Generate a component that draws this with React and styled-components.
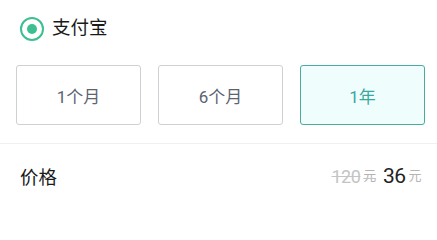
import React, { useState } from "react";
import styled, { createGlobalStyle } from "styled-components";

const GlobalStyle = createGlobalStyle`
  html, body {
    margin: 0;
    padding: 0;
    background: #ffffff;
    font-family: Roboto, "Noto Sans CJK SC", sans-serif;
  }
`;

const plans = ["1个月", "6个月", "1年"];

export default function App() {
  const [selected, setSelected] = useState(2);

  return (
    <>
      <GlobalStyle />
      <Page>
        <PayRow>
          <Radio />
          <PayLabel>支付宝</PayLabel>
        </PayRow>
        <Plans>
          {plans.map((p, i) => (
            <PlanButton key={p} $active={i === selected} onClick={() => setSelected(i)}>
              {p}
            </PlanButton>
          ))}
        </Plans>
        <Divider />
        <PriceRow>
          <PriceLabel>价格</PriceLabel>
          <Prices>
            <OldPrice>
              120<Unit>元</Unit>
            </OldPrice>
            <NewPrice>
              36<Unit>元</Unit>
            </NewPrice>
          </Prices>
        </PriceRow>
      </Page>
    </>
  );
}

const Page = styled.div`
  width: 437px;
  height: 209px;
  display: flex;
  flex-direction: column;
`;

const PayRow = styled.div`
  display: flex;
  align-items: center;
  gap: 8px;
  padding: 17px 20px 0;
  height: 24px;
`;

const Radio = styled.span`
  width: 24px;
  height: 24px;
  box-sizing: border-box;
  border: 2px solid #3dbf90;
  border-radius: 50%;
  display: flex;
  align-items: center;
  justify-content: center;

  &::after {
    content: "";
    width: 10px;
    height: 10px;
    border-radius: 50%;
    background: #3dbf90;
  }
`;

const PayLabel = styled.span`
  font-size: 18.5px;
  color: #1a1a1a;
  line-height: 24px;
  margin-top: -2px;
`;

const Plans = styled.div`
  display: flex;
  gap: 17px;
  padding: 24px 0 0 16px;
`;

const PlanButton = styled.div`
  width: 125px;
  height: 60px;
  box-sizing: border-box;
  border: 1px solid ${(props) => (props.$active ? "#4aaba1" : "#cfd0d2")};
  border-radius: 3px;
  background: ${(props) => (props.$active ? "#f0fdfd" : "#ffffff")};
  color: ${(props) => (props.$active ? "#39a89e" : "#5b6372")};
  font-size: 17px;
  display: flex;
  align-items: center;
  justify-content: center;
  cursor: pointer;
`;

const Divider = styled.div`
  height: 1px;
  background: #f0f0f0;
  margin-top: 18px;
`;

const PriceRow = styled.div`
  display: flex;
  align-items: center;
  justify-content: space-between;
  padding: 0 16px 0 20px;
  height: 70px;
`;

const PriceLabel = styled.span`
  font-size: 18.5px;
  color: #1a1a1a;
`;

const Prices = styled.div`
  display: flex;
  align-items: baseline;
  gap: 7px;
`;

const OldPrice = styled.span`
  font-size: 18px;
  letter-spacing: -0.5px;
  color: #c4c4c4;
  text-decoration: line-through;
`;

const NewPrice = styled.span`
  font-size: 21px;
  letter-spacing: -0.5px;
  color: #222222;
`;

const Unit = styled.span`
  font-size: 13px;
  color: #b4b4b4;
  margin-left: 3px;
  vertical-align: 3px;
`;
